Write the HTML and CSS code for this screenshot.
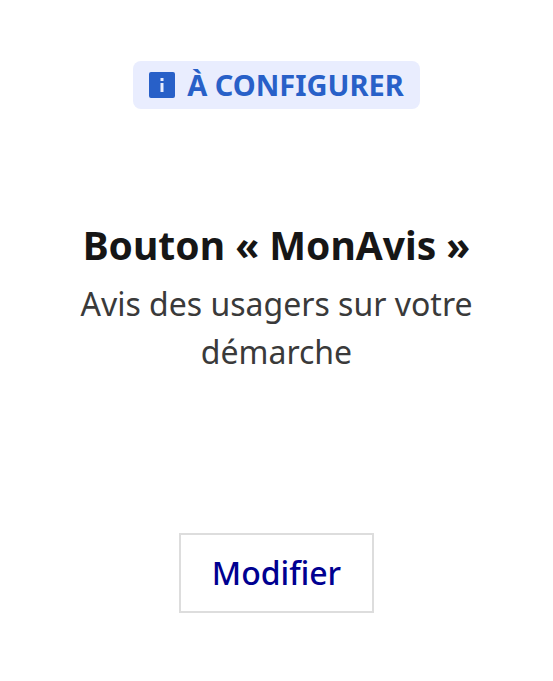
FILE: index.html
```html
<!DOCTYPE html>
<html lang="fr">
<head>
<meta charset="utf-8">
<meta name="viewport" content="width=device-width, initial-scale=1">
<title>Bouton « MonAvis »</title>
<link rel="stylesheet" href="styles.css">
</head>
<body>
<main class="tile">
  <p class="badge">
    <svg class="badge-icon" viewBox="0 0 26 26" aria-hidden="true"><path fill-rule="evenodd" d="M2 0h22a2 2 0 0 1 2 2v22a2 2 0 0 1-2 2H2a2 2 0 0 1-2-2V2a2 2 0 0 1 2-2Zm9.500 6v3h3V6Zm0 5v9h3v-9Z"/></svg>
    <span>À CONFIGURER</span>
  </p>
  <div class="content">
    <h1 class="title">Bouton « MonAvis »</h1>
    <p class="detail">Avis des usagers sur votre démarche</p>
  </div>
  <button class="button" type="button">Modifier</button>
</main>
</body>
</html>
```
FILE: styles.css
```css
* {
  box-sizing: border-box;
}

body {
  margin: 0;
  background: #fff;
  font-family: "Noto Sans", "Open Sans", sans-serif;
}

.tile {
  display: flex;
  flex-direction: column;
  align-items: center;
  padding: 61px 64px 68px;
  text-align: center;
}

.badge {
  display: flex;
  align-items: center;
  gap: 12px;
  margin: 0;
  padding: 0 16px;
  border-radius: 8px;
  background: #e9edfe;
  color: #2860c8;
  font-size: 29px;
  font-weight: 700;
  line-height: 48px;
}

.badge-icon {
  width: 26px;
  height: 26px;
  fill: currentColor;
}

.content {
  margin: 108px 0 157px;
}

.title {
  margin: 0;
  color: #161616;
  font-size: 39px;
  font-weight: 700;
  line-height: 56px;
}

.detail {
  margin: 7px 0 0;
  color: #3a3a3a;
  font-size: 32px;
  line-height: 48px;
}

.button {
  padding: 14px 31px;
  border: 2px solid #ddd;
  border-radius: 0;
  background: #fff;
  color: #000091;
  font-family: inherit;
  font-size: 32px;
  font-weight: 500;
  line-height: 48px;
}
```
